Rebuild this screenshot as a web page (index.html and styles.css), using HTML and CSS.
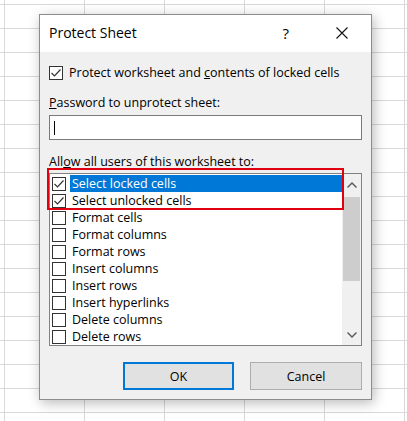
FILE: index.html
```html
<!DOCTYPE html>
<html lang="en">
<head>
<meta charset="utf-8">
<title>Protect Sheet</title>
<link rel="stylesheet" href="styles.css">
</head>
<body>
<div class="dialog">
  <div class="titlebar">
    <span class="title">Protect Sheet</span>
    <span class="help">?</span>
    <svg class="close" width="12" height="12" viewBox="0 0 12 12"><path d="M0.5 0.5 L11.5 11.5 M11.5 0.5 L0.5 11.5" stroke="#111" stroke-width="1.1" fill="none"/></svg>
  </div>
  <div class="content">
    <label class="check-row">
      <span class="box"><svg width="14" height="14" viewBox="0 0 14 14"><polyline points="2.5,7 5.5,10 11.5,3.5" fill="none" stroke="#333" stroke-width="1.2"/></svg></span>
      <span>Protect worksheet and <u>c</u>ontents of locked cells</span>
    </label>
    <div class="label pw-label"><u>P</u>assword to unprotect sheet:</div>
    <div class="input"><span class="caret"></span></div>
    <div class="label allow-label">All<u>o</u>w all users of this worksheet to:</div>
    <div class="listwrap">
      <div class="list">
        <div class="items">
          <div class="item selected"><span class="box"><svg width="14" height="14" viewBox="0 0 14 14"><polyline points="2.5,7 5.5,10 11.5,3.5" fill="none" stroke="#333" stroke-width="1.2"/></svg></span><span class="txt">Select locked cells</span></div>
          <div class="item"><span class="box"><svg width="14" height="14" viewBox="0 0 14 14"><polyline points="2.5,7 5.5,10 11.5,3.5" fill="none" stroke="#333" stroke-width="1.2"/></svg></span><span class="txt">Select unlocked cells</span></div>
          <div class="item"><span class="box"></span><span class="txt">Format cells</span></div>
          <div class="item"><span class="box"></span><span class="txt">Format columns</span></div>
          <div class="item"><span class="box"></span><span class="txt">Format rows</span></div>
          <div class="item"><span class="box"></span><span class="txt">Insert columns</span></div>
          <div class="item"><span class="box"></span><span class="txt">Insert rows</span></div>
          <div class="item"><span class="box"></span><span class="txt">Insert hyperlinks</span></div>
          <div class="item"><span class="box"></span><span class="txt">Delete columns</span></div>
          <div class="item"><span class="box"></span><span class="txt">Delete rows</span></div>
        </div>
        <div class="scrollbar">
          <div class="arrow"><svg width="10" height="6" viewBox="0 0 10 6"><polyline points="0.5,5.5 5,1 9.5,5.5" fill="none" stroke="#606060" stroke-width="1.5"/></svg></div>
          <div class="track"><div class="thumb"></div></div>
          <div class="arrow"><svg width="10" height="6" viewBox="0 0 10 6"><polyline points="0.5,0.5 5,5 9.5,0.5" fill="none" stroke="#606060" stroke-width="1.5"/></svg></div>
        </div>
      </div>
      <div class="highlight-frame"></div>
    </div>
    <div class="buttons">
      <button class="btn default">OK</button>
      <button class="btn">Cancel</button>
    </div>
  </div>
</div>
</body>
</html>
```

FILE: styles.css
```css
html, body {
  margin: 0;
  padding: 0;
}
body {
  width: 407px;
  height: 421px;
  overflow: hidden;
  background-color: #ffffff;
  background-image:
    linear-gradient(to right, #d9d9d9 1px, transparent 1px),
    linear-gradient(to bottom, #d9d9d9 1px, transparent 1px);
  background-size: 80px 24px;
  background-position: 4px 4px;
  font-family: "Open Sans", "Noto Sans", sans-serif;
  font-size: 12.5px;
  color: #000;
  padding-top: 14px;
  padding-left: 39px;
  box-sizing: border-box;
}
.dialog {
  width: 333px;
  height: 386px;
  box-sizing: border-box;
  border: 1px solid #8c8c8c;
  background: #f0f0f0;
  box-shadow: 2px 3px 12px rgba(0, 0, 0, 0.28);
  display: flex;
  flex-direction: column;
}
.titlebar {
  height: 37px;
  background: #ffffff;
  display: flex;
  align-items: center;
  padding-left: 9px;
  padding-right: 23px;
}
.title {
  font-size: 14px;
  flex: 1;
  padding-bottom: 2px;
}
.help {
  font-size: 15px;
  margin-right: 47px;
  padding-bottom: 2px;
}
.close {
  display: block;
  margin-bottom: 1px;
}
.content {
  flex: 1;
  display: flex;
  flex-direction: column;
  padding: 0 9px;
}
.check-row {
  display: flex;
  align-items: center;
  gap: 6px;
  height: 17px;
  margin-top: 12px;
  line-height: 17px;
}
.box {
  width: 14px;
  height: 14px;
  box-sizing: border-box;
  border: 1px solid #333;
  background: #fff;
  flex: none;
  display: flex;
  align-items: center;
  justify-content: center;
}
.box svg {
  display: block;
  flex: none;
}
.label {
  line-height: 17px;
  height: 17px;
}
.pw-label {
  margin-top: 13px;
}
.input {
  margin-top: 4px;
  height: 25px;
  box-sizing: border-box;
  border: 1px solid #7a7a7a;
  background: #fff;
  display: flex;
  align-items: center;
  padding-left: 4px;
}
.caret {
  width: 1px;
  height: 14px;
  background: #000;
}
.allow-label {
  margin-top: 13px;
}
.listwrap {
  position: relative;
  margin-top: 3px;
}
.list {
  height: 173px;
  width: 313px;
  box-sizing: border-box;
  border: 1px solid #828282;
  background: #fff;
  display: flex;
}
.items {
  flex: 1;
  padding-top: 1px;
  padding-left: 2px;
  overflow: hidden;
}
.item {
  height: 17px;
  display: flex;
  align-items: center;
}
.item .txt {
  margin-left: 4px;
  padding-left: 2px;
  flex: 1;
  line-height: 17px;
  height: 17px;
}
.item.selected .txt {
  background: #0078d7;
  color: #fff;
}
.scrollbar {
  width: 19px;
  background: #f0f0f0;
  display: flex;
  flex-direction: column;
}
.arrow {
  height: 21px;
  display: flex;
  align-items: center;
  justify-content: center;
}
.track {
  flex: 1;
  display: flex;
  flex-direction: column;
}
.thumb {
  margin-top: 2px;
  height: 84px;
  margin-left: 1px;
  margin-right: 1px;
  background: #cdcdcd;
}
.highlight-frame {
  position: absolute;
  left: -2px;
  top: -5px;
  width: 297px;
  height: 42px;
  box-sizing: border-box;
  border: 2px solid #e00010;
}
.buttons {
  margin-top: 16px;
  display: flex;
  justify-content: flex-end;
  gap: 16px;
}
.btn {
  width: 112px;
  height: 28px;
  box-sizing: border-box;
  background: #e1e1e1;
  border: 1px solid #adadad;
  font-family: inherit;
  font-size: 12.5px;
  color: #000;
  padding: 0;
}
.btn.default {
  width: 111px;
  border: 2px solid #0078d7;
}
```
